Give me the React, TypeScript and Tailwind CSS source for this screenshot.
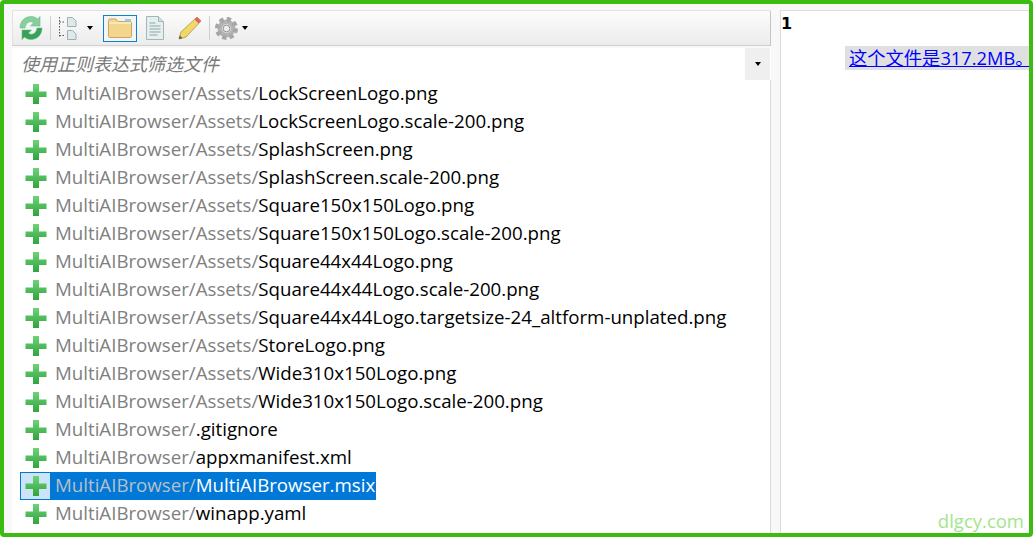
import React from 'react';

const files: [string, string][] = [
  ['MultiAIBrowser/Assets/', 'LockScreenLogo.png'],
  ['MultiAIBrowser/Assets/', 'LockScreenLogo.scale-200.png'],
  ['MultiAIBrowser/Assets/', 'SplashScreen.png'],
  ['MultiAIBrowser/Assets/', 'SplashScreen.scale-200.png'],
  ['MultiAIBrowser/Assets/', 'Square150x150Logo.png'],
  ['MultiAIBrowser/Assets/', 'Square150x150Logo.scale-200.png'],
  ['MultiAIBrowser/Assets/', 'Square44x44Logo.png'],
  ['MultiAIBrowser/Assets/', 'Square44x44Logo.scale-200.png'],
  ['MultiAIBrowser/Assets/', 'Square44x44Logo.targetsize-24_altform-unplated.png'],
  ['MultiAIBrowser/Assets/', 'StoreLogo.png'],
  ['MultiAIBrowser/Assets/', 'Wide310x150Logo.png'],
  ['MultiAIBrowser/Assets/', 'Wide310x150Logo.scale-200.png'],
  ['MultiAIBrowser/', '.gitignore'],
  ['MultiAIBrowser/', 'appxmanifest.xml'],
  ['MultiAIBrowser/', 'MultiAIBrowser.msix'],
  ['MultiAIBrowser/', 'winapp.yaml'],
];

const Plus = () => (
  <svg width="24" height="24" viewBox="0 0 24 24" className="shrink-0 blur-[0.4px]">
    <defs>
      <linearGradient id="plusFill" x1="0" y1="0" x2="0" y2="1">
        <stop offset="0" stopColor="#6fd27a" />
        <stop offset="1" stopColor="#2fa53c" />
      </linearGradient>
    </defs>
    <path d="M9 2h6v7.500h7.500v5.500H15v7H9v-7H1.500V9.500H9z" fill="url(#plusFill)" strokeLinejoin="round" />
  </svg>
);

const Caret = () => <span className="h-0 w-0 border-x-[3.5px] border-t-[4px] border-x-transparent border-t-black" />;

const Sep = () => <span className="h-[24px] w-px shrink-0 bg-[#cfcfcf]" />;

const Toolbar = () => (
  <div className="flex h-[36px] shrink-0 items-center rounded-t-[2px] border border-[#e2e2e2] border-b-[#cfcfcf] border-r-[#c4c4c4] bg-gradient-to-b from-[#fcfcfc] to-[#ececec] pl-[5px]">
    <svg width="26" height="26" viewBox="0 0 26 26" className="shrink-0 blur-[0.5px]">
      <path d="M2 13C2 6 7 1.500 13 1.500c3 0 5 1 6.500 2.500L22 1.500V11h-9.500l3-3c-.8-.8-1.800-1.200-2.800-1.200C9.500 6.800 7.500 9.500 7 13H2z" fill="#86cf9d" stroke="#6fbb89" strokeWidth="0.6" />
      <path d="M24 13c0 7-5 11.500-11 11.500-3 0-5-1-6.500-2.500L4 24.500V15h9.500l-3 3c.8.800 1.800 1.200 2.800 1.200 3.200 0 5.200-2.700 5.700-6.200h5z" fill="#36a257" stroke="#6fbb89" strokeWidth="0.6" />
    </svg>
    <span className="ml-[6px] mr-[7px] flex"><Sep /></span>
    <svg width="20" height="26" viewBox="0 0 20 26" className="shrink-0" fill="none">
      <path d="M1.500 2v20M1.500 7h6M1.500 20.500h6" stroke="#555" strokeDasharray="1.500 1.500" />
      <path d="M9.500 2.500h5l3.500 3.500v5.500H9.500zM9.500 15.500h5l3.500 3.500v5.500H9.500z" fill="#dfe9e9" stroke="#9db0b0" />
    </svg>
    <span className="ml-[9px] mr-[10px] flex"><Caret /></span>
    <span className="flex h-[27px] w-[34px] shrink-0 items-center justify-center border border-[#0f7fd0] bg-[#f4f4f4]">
      <svg width="26" height="22" viewBox="0 0 26 22" className="blur-[0.3px]">
        <path d="M1.500 3.500q0-1.500 1.500-1.500h6l2 2.500h12q1.500 0 1.500 1.500v13q0 1.500-1.500 1.500H3q-1.500 0-1.500-1.500z" fill="#f4d58c" stroke="#c9a763" />
        <path d="M2 6h22" stroke="#fbeec8" strokeWidth="1.500" />
        <path d="M18 2h6v2.500h-6z" fill="#8fd0ee" />
      </svg>
    </span>
    <svg width="20" height="26" viewBox="0 0 20 26" className="ml-[8px] shrink-0 blur-[0.3px]">
      <path d="M1.500 1.500h12l5 5v18h-17z" fill="#e6efef" stroke="#a3b6b6" />
      <path d="M13.500 1.500v5h5" fill="#d4e0e0" stroke="#a3b6b6" />
      <path d="M4.500 8h6M4.500 11h11M4.500 14h11M4.500 17h11M4.500 20h8" stroke="#8fa3a3" />
    </svg>
    <svg width="26" height="26" viewBox="0 0 26 26" className="ml-[12px] shrink-0 blur-[0.3px]">
      <path d="M20 2l4 4L9 22l-7 2 2-7z" fill="#f2d86b" stroke="#bfa244" />
      <path d="M20 2l4 4-2.500 2.500-4-4z" fill="#e4636a" />
      <path d="M2 24l.8-3.500 2.700 2.700z" fill="#555" />
    </svg>
    <span className="ml-[6px] mr-[5px] flex"><Sep /></span>
    <svg width="23" height="23" viewBox="0 0 24 24" className="shrink-0 blur-[0.5px]">
      <circle cx="12" cy="12" r="7" fill="none" stroke="#b4b4b4" strokeWidth="5" />
      <circle cx="12" cy="12" r="9.500" fill="none" stroke="#a6a6a6" strokeWidth="5" strokeDasharray="4.200 3.260" />
      <circle cx="12" cy="12" r="3.500" fill="#ececec" stroke="#8f8f8f" />
    </svg>
    <span className="ml-[4px] flex"><Caret /></span>
  </div>
);

const Row = ({ dir, name, selected }: { dir: string; name: string; selected?: boolean }) => (
  <li className="flex h-[28px] items-center pl-[8px]">
    {selected ? (
      <span className="flex h-[28px] items-center bg-[#0078d7] pr-[1px]">
        <span className="flex h-[28px] w-[31px] items-center justify-center border border-[#0078d7] bg-[#cce4f7]"><Plus /></span>
        <span className="-mt-[2px] pl-[4px] text-[#b9bfc6]">{dir}</span>
        <span className="-mt-[2px] text-white">{name}</span>
      </span>
    ) : (
      <>
        <span className="flex w-[31px] justify-center"><Plus /></span>
        <span className="-mt-[2px] pl-[4px] text-[#808080]">{dir}</span>
        <span className="-mt-[2px] text-black">{name}</span>
      </>
    )}
  </li>
);

export default function App() {
  return (
    <div className="flex h-[537px] w-[1033px] overflow-hidden rounded-[4px] border-4 border-[#3dbb14] bg-[#f8f8f8] font-['Open_Sans','Noto_Sans_CJK_SC',sans-serif]">
      <div className="ml-[8px] mt-[6px] flex w-[759px] shrink-0 flex-col">
        <Toolbar />
        <div className="mt-[2px] flex h-[32px] shrink-0 items-center justify-between bg-white pl-[9px]">
          <span className="text-[18px] italic text-[#7a7a7a]">使用正则表达式筛选文件</span>
          <span className="mr-[1px] flex h-[32px] w-[25px] items-center justify-center bg-[#efefef]"><Caret /></span>
        </div>
        <ul className="min-h-0 flex-1 border-r border-[#dcdcdc] bg-white text-[18.7px] leading-[28px]">
          {files.map(([dir, name]) => (
            <Row key={dir + name} dir={dir} name={name} selected={name === 'MultiAIBrowser.msix'} />
          ))}
        </ul>
      </div>
      <div className="relative ml-[9px] mt-[6px] min-w-0 flex-1 border-l border-t border-[#dcdcdc] bg-white">
        <div className="pt-[2px] font-['DejaVu_Sans',sans-serif] text-[16px] font-bold leading-[22px] text-black">1</div>
        <div className="ml-[64px] mt-[11px] whitespace-nowrap bg-[#e0e0e0] pl-[4px] text-[18.3px] leading-[24px] text-[#0000ff] underline">
          这个文件是317.2MB。
        </div>
        <span className="absolute bottom-[2px] right-[5px] text-[18.5px] leading-[20px] text-[#a3e58a]">dlgcy.com</span>
      </div>
    </div>
  );
}
